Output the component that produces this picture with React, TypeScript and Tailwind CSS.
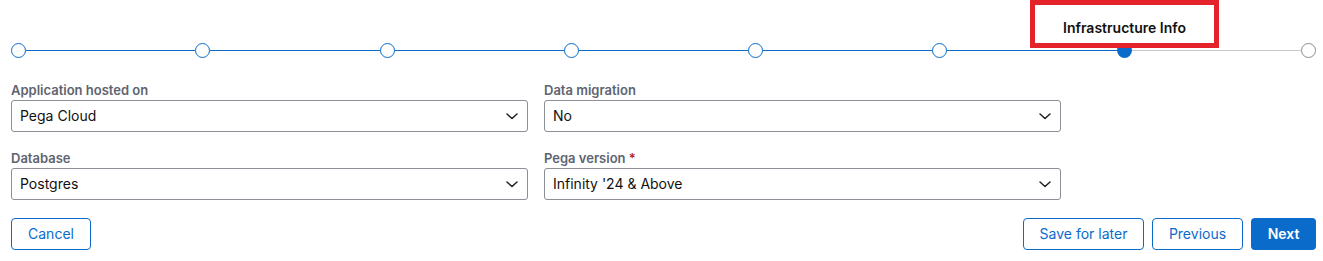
import React from "react";

function Chevron() {
  return (
    <svg width="14" height="14" viewBox="0 0 14 14" fill="none" className="shrink-0">
      <polyline points="2,5 7,9.5 12,5" stroke="#222" strokeWidth="1.5" strokeLinecap="round" strokeLinejoin="round" />
    </svg>
  );
}

function Field({ label, value, required }: { label: string; value: string; required?: boolean }) {
  return (
    <div className="flex flex-col">
      <div className="h-[18px] text-[13px] leading-[16px] font-semibold text-[#5e6470]">
        {label}
        {required && <span className="text-[#b3261e]"> *</span>}
      </div>
      <div className="h-[32px] border border-[#8b8f96] rounded-[3px] flex items-center justify-between pl-[8px] pr-[8px] pb-[1px] text-[14px] text-[#111]">
        <span>{value}</span>
        <Chevron />
      </div>
    </div>
  );
}

export default function App() {
  const steps = 8;
  const active = 6;
  return (
    <div className="w-[1323px] h-[261px] bg-white pl-[11px] pr-[7px]" style={{ fontFamily: "Inter, 'Noto Sans', sans-serif" }}>
      <div className="relative pt-[43px] h-[58px]">
        <div className="flex items-center h-[15px]">
          {Array.from({ length: steps }).map((_, i) => (
            <React.Fragment key={i}>
              <div
                className={
                  i === active
                    ? "w-[15px] h-[15px] rounded-full bg-[#0b6bcb] shrink-0"
                    : i < active
                    ? "w-[15px] h-[15px] rounded-full border-[1.5px] border-[#0b6bcb] bg-white shrink-0"
                    : "w-[15px] h-[15px] rounded-full border-[1.5px] border-[#8a8a8a] bg-white shrink-0"
                }
              />
              {i < steps - 1 && (
                <div className={i < active ? "flex-1 h-[1.5px] bg-[#0b6bcb]" : "flex-1 h-[1.5px] bg-[#c8c8c8]"} />
              )}
            </React.Fragment>
          ))}
        </div>
        <div className="absolute left-[1019px] top-0 w-[189px] h-[48px] border-[5px] border-[#e3222a] bg-white flex items-center justify-center pt-[7px]">
          <span className="text-[14px] font-semibold text-[#111]">Infrastructure Info</span>
        </div>
      </div>

      <div className="mt-[24px] grid grid-cols-[517px_517px] gap-x-[16px] gap-y-[18px]">
        <Field label="Application hosted on" value="Pega Cloud" />
        <Field label="Data migration" value="No" />
        <Field label="Database" value="Postgres" />
        <Field label="Pega version" value="Infinity '24 & Above" required />
      </div>

      <div className="mt-[18px] flex items-center justify-between">
        <button className="h-[32px] w-[80px] border border-[#0b6bcb] rounded-[4px] text-[14px] text-[#0b6bcb] bg-white pb-[1px]">
          Cancel
        </button>
        <div className="flex items-center gap-[8px]">
          <button className="h-[32px] w-[121px] border border-[#0b6bcb] rounded-[4px] text-[14px] text-[#0b6bcb] bg-white pb-[1px]">
            Save for later
          </button>
          <button className="h-[32px] w-[91px] border border-[#0b6bcb] rounded-[4px] text-[14px] text-[#0b6bcb] bg-white pb-[1px]">
            Previous
          </button>
          <button className="h-[32px] w-[65px] rounded-[4px] text-[14px] font-semibold text-white bg-[#0b6bcb] pb-[1px]">
            Next
          </button>
        </div>
      </div>
    </div>
  );
}
